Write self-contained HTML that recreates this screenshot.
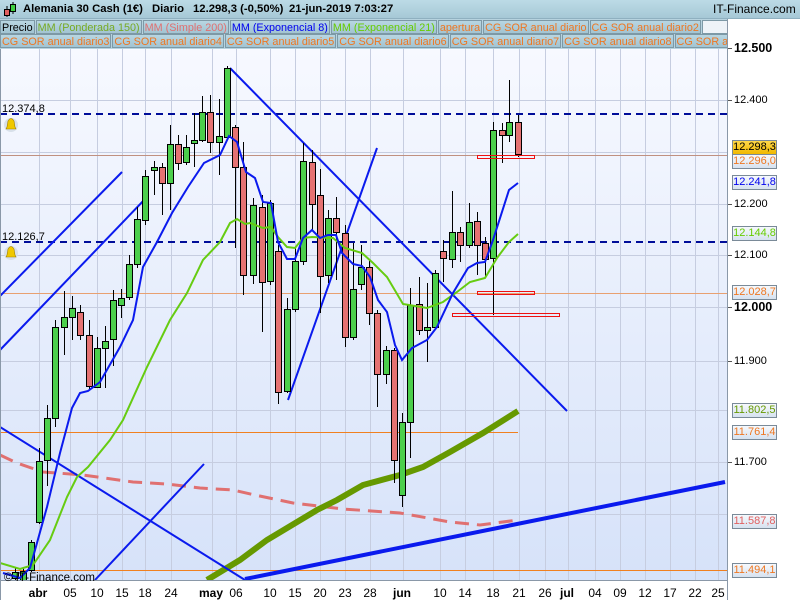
<!DOCTYPE html>
<html><head><meta charset="utf-8"><style>
body{margin:0;width:800px;height:600px;overflow:hidden;background:#fff;font-family:"Liberation Sans",sans-serif;position:relative}
#hdr{position:absolute;left:0;top:0;width:800px;height:18px;background:linear-gradient(#bcdbe6,#a6c8d6);border-bottom:1px solid #8fb0c0}
#hdr b{position:absolute;top:3px;font-size:11.3px;color:#000;white-space:nowrap}
.row{position:absolute;left:0;width:728px;height:14px;display:flex;font-size:10.8px;line-height:14px;overflow:hidden}
.row span{background:linear-gradient(#b8d6e2,#a2c4d2);border:1px solid #7d99a6;padding:0 1px;margin-right:1px;white-space:nowrap;overflow:hidden;flex-shrink:0}
.lb{position:absolute;left:732px;width:43px;height:13px;border:1px solid #7a8a98;background:linear-gradient(#f6f9fd,#d6e2f0);font-size:11px;line-height:13px;text-align:center}
.tx{position:absolute;left:734px;font-size:11px;line-height:13px}
</style></head><body>
<div id="hdr">
<svg style="position:absolute;left:3px;top:2px" width="14" height="15"><line x1="4" y1="4" x2="4" y2="15" stroke="#000"/><rect x="1.5" y="7.5" width="5" height="6" fill="#e06060" stroke="#000"/><line x1="10" y1="0" x2="10" y2="12" stroke="#000"/><rect x="7.5" y="2.5" width="5" height="7" fill="#40d040" stroke="#000"/></svg>
<b style="left:23px">Alemania 30 Cash (1€)</b><b style="left:152px">Diario</b><b style="left:193px">12.298,3 (-0,50%)</b><b style="left:289px">21-jun-2019 7:03:27</b>
<b style="left:713px;font-weight:normal;font-size:12px;top:2px">IT-Finance.com</b>
</div>
<div style="position:absolute;left:0;top:19px;width:728px;height:30px;background:#b7d3df"></div>
<div class="row" style="top:20px"><span style="color:#000">Precio</span><span style="color:#77aa22">MM (Ponderada 150)</span><span style="color:#e07070">MM (Simple 200)</span><span style="color:#0000ee">MM (Exponencial 8)</span><span style="color:#66cc00">MM (Exponencial 21)</span><span style="color:#ee7722">apertura</span><span style="color:#ee7722">CG SOR anual diario</span><span style="color:#ee7722">CG SOR anual diario2</span><span style="background:#eef3f8;width:22px"></span><span style="background:#eef3f8;width:8px"></span></div>
<div class="row" style="top:34px"><span style="color:#ee7722">CG SOR anual diario3</span><span style="color:#ee7722">CG SOR anual diario4</span><span style="color:#ee7722">CG SOR anual diario5</span><span style="color:#ee7722">CG SOR anual diario6</span><span style="color:#ee7722">CG SOR anual diario7</span><span style="color:#ee7722">CG SOR anual diario8</span><span style="color:#ee7722">CG SOR anual diario9</span></div>
<svg style="position:absolute;left:0;top:0" width="800" height="600">
<defs><linearGradient id="bg" x1="0" y1="0" x2="0" y2="1"><stop offset="0" stop-color="#f7f9ff"/><stop offset="1" stop-color="#d6e2f9"/></linearGradient></defs>
<rect x="0" y="49" width="727" height="531" fill="url(#bg)"/>
<g stroke="#c6cde0" stroke-width="1">
<line x1="0" y1="100.5" x2="727" y2="100.5"/><line x1="0" y1="204.5" x2="727" y2="204.5"/><line x1="0" y1="255.5" x2="727" y2="255.5"/><line x1="0" y1="307.5" x2="727" y2="307.5"/><line x1="0" y1="361.5" x2="727" y2="361.5"/><line x1="0" y1="462.5" x2="727" y2="462.5"/><line x1="0" y1="514.5" x2="727" y2="514.5"/><line x1="0" y1="152.5" x2="727" y2="152.5"/><line x1="0" y1="410.5" x2="727" y2="410.5"/>
<line x1="39.5" y1="49" x2="39.5" y2="580"/><line x1="70.5" y1="49" x2="70.5" y2="580"/><line x1="97.5" y1="49" x2="97.5" y2="580"/><line x1="122.5" y1="49" x2="122.5" y2="580"/><line x1="145.5" y1="49" x2="145.5" y2="580"/><line x1="171.5" y1="49" x2="171.5" y2="580"/><line x1="212.5" y1="49" x2="212.5" y2="580"/><line x1="236.5" y1="49" x2="236.5" y2="580"/><line x1="270.5" y1="49" x2="270.5" y2="580"/><line x1="295.5" y1="49" x2="295.5" y2="580"/><line x1="320.5" y1="49" x2="320.5" y2="580"/><line x1="345.5" y1="49" x2="345.5" y2="580"/><line x1="370.5" y1="49" x2="370.5" y2="580"/><line x1="403.5" y1="49" x2="403.5" y2="580"/><line x1="440.5" y1="49" x2="440.5" y2="580"/><line x1="465.5" y1="49" x2="465.5" y2="580"/><line x1="493.5" y1="49" x2="493.5" y2="580"/><line x1="519.5" y1="49" x2="519.5" y2="580"/><line x1="545.5" y1="49" x2="545.5" y2="580"/><line x1="568.5" y1="49" x2="568.5" y2="580"/><line x1="595.5" y1="49" x2="595.5" y2="580"/><line x1="620.5" y1="49" x2="620.5" y2="580"/><line x1="645.5" y1="49" x2="645.5" y2="580"/><line x1="670.5" y1="49" x2="670.5" y2="580"/><line x1="695.5" y1="49" x2="695.5" y2="580"/><line x1="718.5" y1="49" x2="718.5" y2="580"/>
</g>
<g stroke="#f08020" stroke-width="1">
<line x1="0" y1="155.5" x2="727" y2="155.5" stroke="#c09080"/><line x1="0" y1="293.5" x2="727" y2="293.5" stroke="#e8a070"/><line x1="0" y1="432.5" x2="518" y2="432.5"/><line x1="0" y1="570.5" x2="727" y2="570.5"/>
</g>
<g stroke="#000d99" stroke-width="2" stroke-dasharray="7,5"><line x1="0" y1="114" x2="727" y2="114"/><line x1="0" y1="242" x2="727" y2="242"/></g>
<polyline fill="none" stroke="#e07070" stroke-width="3" stroke-dasharray="14,8" points="0,455 17,463 43,472 57,473 83,475 133,482 167,484 200,488 233,490 255,495 293,503 343,509 400,513 450,522 480,525 518,520"/>
<polyline fill="none" stroke="#669900" stroke-width="6" points="207,580 240,560 267,540 317,510 337,500 363,485 400,475 423,467 450,452 483,433 518,411"/>
<g fill="none" stroke="#0a1aee" stroke-width="2">
<line x1="0" y1="296" x2="122" y2="172"/><line x1="0" y1="350" x2="147" y2="197"/><line x1="230" y1="68" x2="567" y2="411"/><line x1="288" y1="400" x2="377" y2="148"/><line x1="0" y1="427" x2="245" y2="580"/><line x1="95" y1="580" x2="204" y2="464"/>
</g>
<line x1="245" y1="579" x2="725" y2="482" stroke="#0a1aee" stroke-width="4"/>
<g stroke="#000" stroke-width="1">
<line x1="15.5" y1="568" x2="15.5" y2="580"/><line x1="23.5" y1="568" x2="23.5" y2="582"/><line x1="31.5" y1="540" x2="31.5" y2="572"/><line x1="39.5" y1="448" x2="39.5" y2="524"/><line x1="47.5" y1="405" x2="47.5" y2="486"/><line x1="55.5" y1="320" x2="55.5" y2="427"/><line x1="64.5" y1="291" x2="64.5" y2="355"/><line x1="72.5" y1="296" x2="72.5" y2="340"/><line x1="80.5" y1="305" x2="80.5" y2="340"/><line x1="89.5" y1="320" x2="89.5" y2="390"/><line x1="97.5" y1="337" x2="97.5" y2="388"/><line x1="105.5" y1="326" x2="105.5" y2="388"/><line x1="113.5" y1="290" x2="113.5" y2="366"/><line x1="121.5" y1="289" x2="121.5" y2="318"/><line x1="129.5" y1="255" x2="129.5" y2="300"/><line x1="137.5" y1="207" x2="137.5" y2="268"/><line x1="145.5" y1="170" x2="145.5" y2="225"/><line x1="154.5" y1="161" x2="154.5" y2="195"/><line x1="162.5" y1="163" x2="162.5" y2="215"/><line x1="170.5" y1="125" x2="170.5" y2="210"/><line x1="178.5" y1="135" x2="178.5" y2="170"/><line x1="186.5" y1="135" x2="186.5" y2="165"/><line x1="194.5" y1="113" x2="194.5" y2="167"/><line x1="202.5" y1="96" x2="202.5" y2="142"/><line x1="210.5" y1="95" x2="210.5" y2="153"/><line x1="219.5" y1="99" x2="219.5" y2="175"/><line x1="227.5" y1="66" x2="227.5" y2="140"/><line x1="235.5" y1="125" x2="235.5" y2="248"/><line x1="243.5" y1="142" x2="243.5" y2="295"/><line x1="253.5" y1="198" x2="253.5" y2="284"/><line x1="262.5" y1="195" x2="262.5" y2="332"/><line x1="270.5" y1="200" x2="270.5" y2="285"/><line x1="278.5" y1="245" x2="278.5" y2="404"/><line x1="287.5" y1="298" x2="287.5" y2="393"/><line x1="295.5" y1="248" x2="295.5" y2="312"/><line x1="303.5" y1="143" x2="303.5" y2="265"/><line x1="312.5" y1="150" x2="312.5" y2="230"/><line x1="320.5" y1="169" x2="320.5" y2="313"/><line x1="328.5" y1="210" x2="328.5" y2="283"/><line x1="336.5" y1="197" x2="336.5" y2="280"/><line x1="345.5" y1="225" x2="345.5" y2="347"/><line x1="353.5" y1="243" x2="353.5" y2="340"/><line x1="361.5" y1="245" x2="361.5" y2="290"/><line x1="369.5" y1="260" x2="369.5" y2="325"/><line x1="377.5" y1="310" x2="377.5" y2="407"/><line x1="386.5" y1="346" x2="386.5" y2="384"/><line x1="394.5" y1="348" x2="394.5" y2="483"/><line x1="402.5" y1="413" x2="402.5" y2="507"/><line x1="410.5" y1="288" x2="410.5" y2="458"/><line x1="419.5" y1="277" x2="419.5" y2="335"/><line x1="427.5" y1="283" x2="427.5" y2="362"/><line x1="435.5" y1="270" x2="435.5" y2="330"/><line x1="443.5" y1="240" x2="443.5" y2="282"/><line x1="452.5" y1="191" x2="452.5" y2="268"/><line x1="460.5" y1="227" x2="460.5" y2="262"/><line x1="469.5" y1="203" x2="469.5" y2="248"/><line x1="477.5" y1="212" x2="477.5" y2="275"/><line x1="485.5" y1="237" x2="485.5" y2="277"/><line x1="493.5" y1="122" x2="493.5" y2="315"/><line x1="502.5" y1="123" x2="502.5" y2="163"/><line x1="509.5" y1="80" x2="509.5" y2="142"/><line x1="518.5" y1="115" x2="518.5" y2="157"/>
</g>
<g stroke="#000" stroke-width="1" fill="#4ccf4c">
<rect x="12.5" y="572.5" width="6" height="6"/><rect x="20.5" y="571.5" width="6" height="9"/><rect x="28.5" y="542.5" width="6" height="28"/><rect x="36.5" y="461.5" width="6" height="61"/><rect x="44.5" y="418.5" width="6" height="42"/><rect x="52.5" y="327.5" width="6" height="91"/><rect x="61.5" y="317.5" width="6" height="10"/><rect x="69.5" y="308.5" width="6" height="9"/><rect x="94.5" y="348.5" width="6" height="39"/><rect x="102.5" y="341.5" width="6" height="7"/><rect x="110.5" y="300.5" width="6" height="39"/><rect x="118.5" y="298.5" width="6" height="7"/><rect x="126.5" y="264.5" width="6" height="33"/><rect x="134.5" y="219.5" width="6" height="45"/><rect x="142.5" y="176.5" width="6" height="44"/><rect x="151.5" y="167.5" width="6" height="3"/><rect x="167.5" y="144.5" width="6" height="39"/><rect x="183.5" y="147.5" width="6" height="15"/><rect x="191.5" y="140.5" width="6" height="3"/><rect x="199.5" y="112.5" width="6" height="28"/><rect x="216.5" y="136.5" width="6" height="6"/><rect x="224.5" y="68.5" width="6" height="69"/><rect x="250.5" y="205.5" width="6" height="70"/><rect x="267.5" y="203.5" width="6" height="78"/><rect x="284.5" y="309.5" width="6" height="82"/><rect x="292.5" y="261.5" width="6" height="48"/><rect x="300.5" y="161.5" width="6" height="100"/><rect x="325.5" y="218.5" width="6" height="57"/><rect x="350.5" y="289.5" width="6" height="48"/><rect x="358.5" y="267.5" width="6" height="17"/><rect x="383.5" y="350.5" width="6" height="24"/><rect x="399.5" y="422.5" width="6" height="73"/><rect x="407.5" y="305.5" width="6" height="117"/><rect x="424.5" y="327.5" width="6" height="3"/><rect x="432.5" y="273.5" width="6" height="54"/><rect x="449.5" y="232.5" width="6" height="27"/><rect x="466.5" y="222.5" width="6" height="23"/><rect x="490.5" y="130.5" width="6" height="128"/><rect x="506.5" y="122.5" width="6" height="13"/>
</g>
<g stroke="#000" stroke-width="1" fill="#e57272">
<rect x="77.5" y="312.5" width="6" height="23"/><rect x="86.5" y="335.5" width="6" height="51"/><rect x="159.5" y="167.5" width="6" height="16"/><rect x="175.5" y="144.5" width="6" height="19"/><rect x="207.5" y="112.5" width="6" height="30"/><rect x="232.5" y="127.5" width="6" height="40"/><rect x="240.5" y="167.5" width="6" height="108"/><rect x="259.5" y="207.5" width="6" height="75"/><rect x="275.5" y="251.5" width="6" height="141"/><rect x="309.5" y="162.5" width="6" height="42"/><rect x="317.5" y="195.5" width="6" height="81"/><rect x="333.5" y="218.5" width="6" height="14"/><rect x="342.5" y="233.5" width="6" height="104"/><rect x="366.5" y="267.5" width="6" height="46"/><rect x="374.5" y="313.5" width="6" height="61"/><rect x="391.5" y="350.5" width="6" height="110"/><rect x="416.5" y="304.5" width="6" height="26"/><rect x="440.5" y="251.5" width="6" height="7"/><rect x="457.5" y="232.5" width="6" height="13"/><rect x="474.5" y="221.5" width="6" height="24"/><rect x="482.5" y="243.5" width="6" height="16"/><rect x="499.5" y="130.5" width="6" height="5"/><rect x="515.5" y="122.5" width="6" height="32"/>
</g>
<polyline fill="none" stroke="#66cc11" stroke-width="2" points="0,563 20,569 33,565 50,540 67,497 77,477 88,467 110,440 123,420 147,367 170,320 187,293 203,260 220,242 230,223 237,219 245,224 250,223 263,228 271,227 278,237 287,247 295,248 303,238 312,237 333,238 345,248 362,253 373,263 387,277 403,304 427,308 443,302 457,292 470,282 485,278 497,258 509,242 518,234"/>
<polyline fill="none" stroke="#0a1aee" stroke-width="2" points="3,573 20,578 30,568 47,507 60,453 72,408 80,393 88,391 100,382 120,347 133,320 143,267 157,242 172,213 188,187 204,163 220,155 229,136 237,142 246,172 255,178 263,202 271,203 278,242 287,259 295,259 303,238 312,230 320,238 328,235 336,235 342,253 353,264 362,266 370,277 378,300 387,312 395,345 402,360 412,348 427,340 437,327 453,293 468,268 477,263 485,262 493,240 509,190 518,183"/>
<g fill="none" stroke="#ee1111" stroke-width="1"><rect x="477.5" y="155.5" width="57" height="3"/><rect x="477.5" y="291.5" width="57" height="3"/><rect x="452.5" y="313.5" width="107" height="3"/></g>
<rect x="0" y="580" width="727" height="20" fill="#fff"/>
<line x1="727.5" y1="19" x2="727.5" y2="600" stroke="#8a98a8"/>
<line x1="0" y1="580.5" x2="727" y2="580.5" stroke="#8a98a8"/>
<line x1="0.5" y1="49" x2="0.5" y2="600" stroke="#8a98a8"/>
<g font-size="11" fill="#000" font-family="Liberation Sans,sans-serif">
<text x="2" y="112">12.374,8</text><text x="2" y="240">12.126,7</text>
<text x="4" y="581" font-size="11.5">© IT-Finance.com</text>
</g>
<g><circle cx="11" cy="125" r="7" fill="#d8e0ea"/><path d="M6,129 L7,127 L8,121 Q11,116 14,121 L15,127 L16,129 Z" fill="#f0c800" stroke="#a08000" stroke-width=".6"/><circle cx="11" cy="253" r="7" fill="#d8e0ea"/><path d="M6,257 L7,255 L8,249 Q11,244 14,249 L15,255 L16,257 Z" fill="#f0c800" stroke="#a08000" stroke-width=".6"/></g>
<g font-size="12" text-anchor="middle" fill="#000">
<text x="38" y="597" font-weight="bold">abr</text><text x="70" y="597">05</text><text x="97" y="597">10</text><text x="122" y="597">15</text><text x="145" y="597">18</text><text x="171" y="597">24</text><text x="211" y="597" font-weight="bold">may</text><text x="236" y="597">06</text><text x="270" y="597">10</text><text x="295" y="597">15</text><text x="320" y="597">20</text><text x="345" y="597">23</text><text x="370" y="597">28</text><text x="402" y="597" font-weight="bold">jun</text><text x="440" y="597">10</text><text x="465" y="597">14</text><text x="493" y="597">18</text><text x="519" y="597">21</text><text x="545" y="597">26</text><text x="567" y="597" font-weight="bold">jul</text><text x="595" y="597">04</text><text x="620" y="597">09</text><text x="645" y="597">12</text><text x="670" y="597">17</text><text x="695" y="597">22</text><text x="718" y="597">25</text>
</g>
<g stroke="#555"><line x1="728" y1="48.5" x2="732" y2="48.5"/><line x1="728" y1="100.5" x2="732" y2="100.5"/><line x1="728" y1="204.5" x2="732" y2="204.5"/><line x1="728" y1="255.5" x2="732" y2="255.5"/><line x1="728" y1="307.5" x2="732" y2="307.5"/><line x1="728" y1="361.5" x2="732" y2="361.5"/><line x1="728" y1="462.5" x2="732" y2="462.5"/></g>
</svg>
<div class="tx" style="top:42px;font-weight:bold;font-size:12.5px">12.500</div>
<div class="tx" style="top:94px">12.400</div>
<div class="lb" style="top:140px;background:linear-gradient(#ffd84a,#f0b800)">12.298,3</div>
<div class="lb" style="top:154px;color:#ee7722">12.296,0</div>
<div class="lb" style="top:175px;color:#0000ee">12.241,8</div>
<div class="tx" style="top:198px">12.200</div>
<div class="lb" style="top:226px;color:#66cc00">12.144,8</div>
<div class="tx" style="top:249px">12.100</div>
<div class="lb" style="top:285px;color:#ee7722">12.028,7</div>
<div class="tx" style="top:301px;font-weight:bold;font-size:12.5px">12.000</div>
<div class="tx" style="top:355px">11.900</div>
<div class="lb" style="top:403px;color:#669900">11.802,5</div>
<div class="lb" style="top:425px;color:#ee7722">11.761,4</div>
<div class="tx" style="top:456px">11.700</div>
<div class="lb" style="top:514px;color:#e06060">11.587,8</div>
<div class="lb" style="top:563px;color:#ee7722">11.494,1</div>
</body></html>
